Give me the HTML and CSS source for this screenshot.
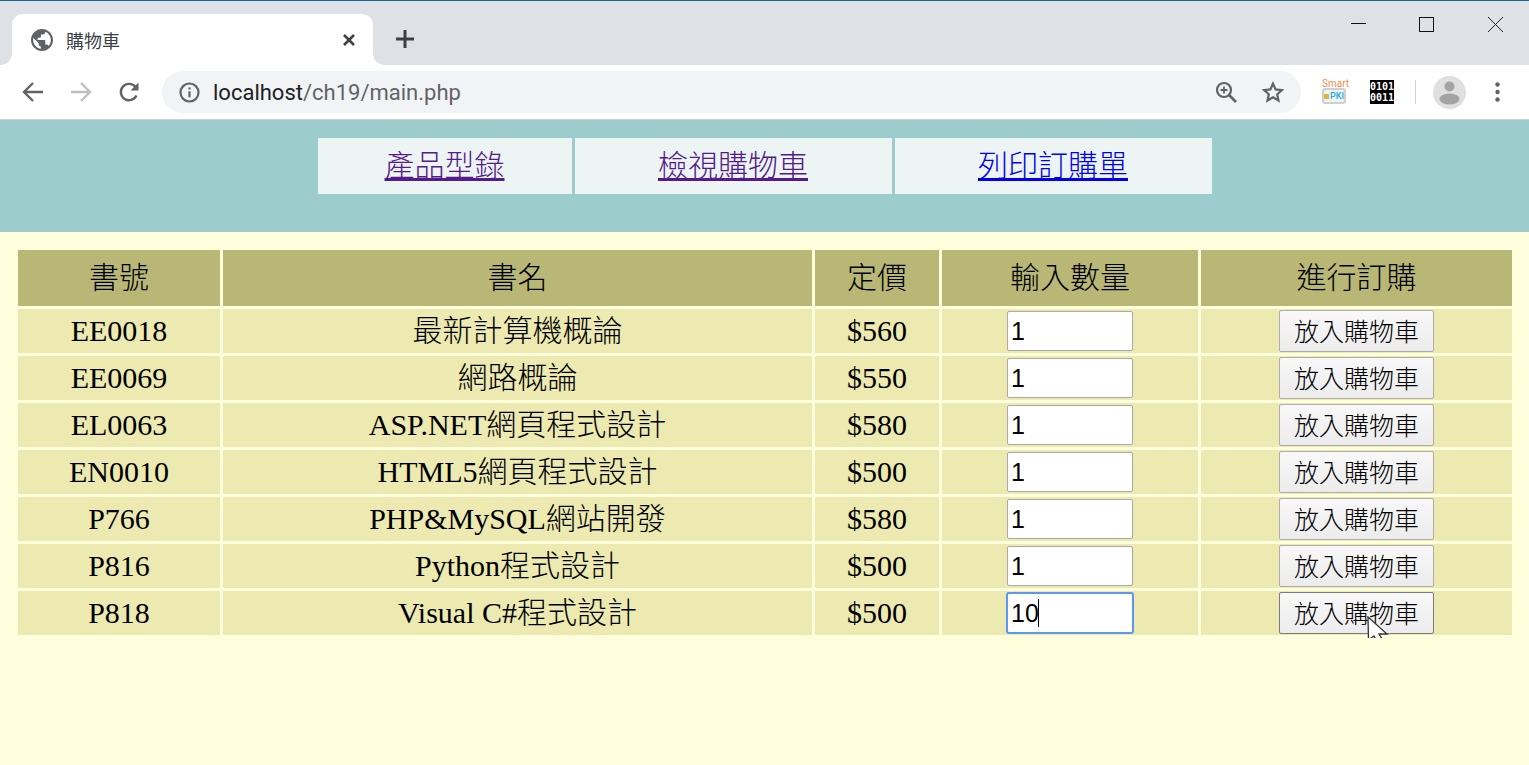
FILE: index.html
```html
<!DOCTYPE html>
<html lang="zh-Hant">

<head>
    <meta charset="UTF-8">
    <title>購物車</title>
    <link rel="stylesheet" href="styles.css">
</head>

<body>
    <div class="browser">
        <div class="tabstrip">
            <div class="tab">
                <svg class="favicon" width="22" height="22" viewBox="2 2 20 20">
                    <path d="M12 2C6.480 2 2 6.480 2 12s4.480 10 10 10 10-4.480 10-10S17.520 2 12 2zm-1 17.930c-3.950-.490-7-3.850-7-7.930 0-.620.080-1.210.210-1.790L9 15v1c0 1.100.900 2 2 2v1.930zm6.900-2.540c-.260-.810-1-1.390-1.900-1.390h-1v-3c0-.550-.450-1-1-1H8v-2h2c.550 0 1-.450 1-1V7h2c1.100 0 2-.900 2-2v-.410c2.930 1.190 5 4.060 5 7.410 0 2.080-.800 3.970-2.100 5.390z" fill="#5f6368" />
                </svg>
                <span class="tab-title">購物車</span>
                <svg class="tab-close" width="14" height="14" viewBox="0 0 14 14">
                    <path d="M2 2l10 10M12 2L2 12" stroke="#3c4043" stroke-width="2.600" fill="none" />
                </svg>
            </div>
            <svg class="new-tab" width="18" height="18" viewBox="0 0 18 18">
                <path d="M9 0v18M0 9h18" stroke="#3c4043" stroke-width="3" fill="none" />
            </svg>
            <div class="window-controls">
                <svg width="15" height="15" viewBox="0 0 15 15">
                    <path d="M0 6.500h15" stroke="#111" stroke-width="1" fill="none" />
                </svg>
                <svg width="15" height="15" viewBox="0 0 15 15">
                    <rect x="0.500" y="0.500" width="14" height="14" stroke="#111" fill="none" />
                </svg>
                <svg class="win-close" width="15" height="15" viewBox="0 0 15 15">
                    <path d="M0 0l15 15M15 0L0 15" stroke="#222" stroke-width="1" fill="none" />
                </svg>
            </div>
        </div>
        <div class="toolbar">
            <svg class="tool-icon" width="22" height="22" viewBox="0 0 22 22">
                <path d="M21 11H3M11 2l-9 9 9 9" stroke="#5f6368" stroke-width="2.400" fill="none" />
            </svg>
            <svg class="tool-icon" width="22" height="22" viewBox="0 0 22 22">
                <path d="M1 11h18M11 2l9 9-9 9" stroke="#bdbfc2" stroke-width="2.400" fill="none" />
            </svg>
            <svg class="tool-icon" width="22" height="22" viewBox="0 0 22 22">
                <path d="M18.500 14.500a8.200 8.200 0 1 1-1.200-8.800" stroke="#5f6368" stroke-width="2.400" fill="none" />
                <path d="M20.500 1.500v8h-8z" fill="#5f6368" />
            </svg>
            <div class="omnibox">
                <svg width="21" height="21" viewBox="0 0 21 21">
                    <circle cx="10.500" cy="10.500" r="9" stroke="#5f6368" stroke-width="2.200" fill="none" />
                    <path d="M9.400 9.200h2.200v6H9.400zM9.400 5.400h2.200v2.200H9.400z" fill="#5f6368" />
                </svg>
                <span class="url"><span class="url-host">localhost</span>/ch19/main.php</span>
                <svg class="zoom-icon" width="22" height="22" viewBox="0 0 22 22">
                    <circle cx="9" cy="9" r="7" stroke="#5f6368" stroke-width="2.200" fill="none" />
                    <path d="M14 14l7 7" stroke="#5f6368" stroke-width="2.600" fill="none" />
                    <path d="M9 5.500v7M5.500 9h7" stroke="#5f6368" stroke-width="1.800" fill="none" />
                </svg>
                <svg class="star-icon" width="22" height="22" viewBox="0 0 22 22">
                    <path d="M11 2.600l2.600 5.800 6.300.7-4.700 4.200 1.300 6.200-5.500-3.200-5.500 3.200 1.300-6.200-4.700-4.200 6.300-.7z" stroke="#5f6368" stroke-width="2.200" fill="none" />
                </svg>
            </div>
            <div class="pki">
                <span class="pki-smart">Smart</span>
                <span class="pki-card"><i class="pki-chip"></i>PKI</span>
            </div>
            <div class="binary">0101<br>0011</div>
            <div class="tool-sep"></div>
            <svg class="avatar" width="33" height="33" viewBox="0 0 33 33">
                <circle cx="16.500" cy="16.500" r="16.500" fill="#dfdfdf" />
                <circle cx="16.500" cy="10.500" r="5" fill="#a3a3a3" />
                <ellipse cx="16.500" cy="23" rx="10" ry="5.500" fill="#a3a3a3" />
            </svg>
            <svg class="menu-dots" width="5" height="21" viewBox="0 0 5 21">
                <circle cx="2.500" cy="2.500" r="2.200" fill="#5f6368" />
                <circle cx="2.500" cy="10" r="2.200" fill="#5f6368" />
                <circle cx="2.500" cy="17.500" r="2.200" fill="#5f6368" />
            </svg>
        </div>
    </div>

    <header class="site-header">
        <table class="nav-table">
            <tr>
                <td class="nav-1"><a class="visited" href="#">產品型錄</a></td>
                <td class="nav-2"><a class="visited" href="#">檢視購物車</a></td>
                <td class="nav-3"><a class="unvisited" href="#">列印訂購單</a></td>
            </tr>
        </table>
    </header>

    <main class="page">
        <table class="books">
            <colgroup>
                <col class="col-id">
                <col class="col-name">
                <col class="col-price">
                <col class="col-qty">
                <col class="col-act">
            </colgroup>
            <tr>
                <th>書號</th>
                <th>書名</th>
                <th>定價</th>
                <th>輸入數量</th>
                <th>進行訂購</th>
            </tr>
            <tr>
                <td>EE0018</td>
                <td>最新計算機概論</td>
                <td>$560</td>
                <td><input class="qty" type="text" value="1"></td>
                <td><button class="add" type="button">放入購物車</button></td>
            </tr>
            <tr>
                <td>EE0069</td>
                <td>網路概論</td>
                <td>$550</td>
                <td><input class="qty" type="text" value="1"></td>
                <td><button class="add" type="button">放入購物車</button></td>
            </tr>
            <tr>
                <td>EL0063</td>
                <td>ASP.NET網頁程式設計</td>
                <td>$580</td>
                <td><input class="qty" type="text" value="1"></td>
                <td><button class="add" type="button">放入購物車</button></td>
            </tr>
            <tr>
                <td>EN0010</td>
                <td>HTML5網頁程式設計</td>
                <td>$500</td>
                <td><input class="qty" type="text" value="1"></td>
                <td><button class="add" type="button">放入購物車</button></td>
            </tr>
            <tr>
                <td>P766</td>
                <td>PHP&amp;MySQL網站開發</td>
                <td>$580</td>
                <td><input class="qty" type="text" value="1"></td>
                <td><button class="add" type="button">放入購物車</button></td>
            </tr>
            <tr>
                <td>P816</td>
                <td>Python程式設計</td>
                <td>$500</td>
                <td><input class="qty" type="text" value="1"></td>
                <td><button class="add" type="button">放入購物車</button></td>
            </tr>
            <tr>
                <td>P818</td>
                <td>Visual C#程式設計</td>
                <td>$500</td>
                <td>
                    <span class="qty-wrap">
                        <input class="qty qty-focus" type="text" value="10">
                        <i class="caret"></i>
                    </span>
                </td>
                <td>
                    <span class="add-wrap">
                        <button class="add add-hover" type="button">放入購物車</button>
                        <svg class="cursor" width="22" height="29" viewBox="0 0 22 29">
                            <path d="M1 1L1.500 24L7 20L11 27.500L16 24.500L12 18H20Z" fill="#fff" stroke="#333" stroke-width="1.300" />
                        </svg>
                    </span>
                </td>
            </tr>
        </table>
    </main>
</body>

</html>
```

FILE: styles.css
```css
body {
    margin: 0;
    background-color: #ffffdd;
    font-family: "Liberation Serif", "Noto Sans CJK TC", serif;
    font-weight: 300;
    overflow: hidden;
}

/* browser window */
.browser {
    height: 120px;
    font-family: "Roboto", "Noto Sans CJK TC", sans-serif;
    font-weight: 400;
}

.tabstrip {
    display: flex;
    align-items: flex-end;
    height: 64px;
    padding-left: 12px;
    background-color: #dee1e6;
    border-top: 1px solid #20618c;
}

.tab {
    position: relative;
    display: flex;
    align-items: center;
    box-sizing: border-box;
    width: 361px;
    height: 51px;
    padding: 0 17px 0 19px;
    background-color: white;
    border-radius: 11px 11px 0 0;
}

/* inverse corners at the foot of the tab */
.tab::before,
.tab::after {
    content: "";
    position: absolute;
    bottom: 0;
    width: 11px;
    height: 11px;
}

.tab::before {
    left: -11px;
    background-image: radial-gradient(circle at 0 0, transparent 10.500px, white 11px);
}

.tab::after {
    right: -11px;
    background-image: radial-gradient(circle at 100% 0, transparent 10.500px, white 11px);
}

.favicon {
    flex: none;
}

.tab-title {
    margin-left: 13px;
    font-size: 18px;
    color: #3c4043;
}

.tab-close {
    margin-left: auto;
}

.new-tab {
    margin: 0 0 17px 23px;
}

.window-controls {
    display: flex;
    gap: 53px;
    margin: 0 26px 33px auto;
}

.win-close {
    margin-left: 1px;
}

.toolbar {
    display: flex;
    align-items: center;
    box-sizing: border-box;
    height: 55px;
    padding: 0 21px 0 22px;
    background-color: white;
    border-bottom: 1px solid #c4d4d4;
}

.tool-icon {
    flex: none;
    margin-right: 26px;
}

.tool-icon:nth-child(3) {
    margin-right: 22px;
}

.omnibox {
    display: flex;
    align-items: center;
    box-sizing: border-box;
    width: 1139px;
    height: 42px;
    padding: 0 17px;
    background-color: #f1f3f4;
    border-radius: 21px;
}

.url {
    margin-left: 13px;
    font-size: 22px;
    color: #5f6368;
}

.url-host {
    color: #202124;
}

.zoom-icon {
    margin-left: auto;
}

.star-icon {
    margin-left: 25px;
}

.pki {
    width: 24px;
    margin-left: 21px;
    text-align: center;
    line-height: 1;
}

.pki-smart {
    display: block;
    height: 8px;
    font-size: 10px;
    line-height: 8px;
    color: #f58a4b;
    white-space: nowrap;
}

.pki-card {
    display: flex;
    align-items: center;
    justify-content: flex-end;
    box-sizing: border-box;
    height: 16px;
    font-size: 9px;
    font-weight: 500;
    white-space: nowrap;
    color: #2aa7ea;
    background-color: #eef4f4;
    border: 2px solid #cfcfcf;
    border-radius: 3px;
}

.pki-chip {
    flex: none;
    width: 5px;
    height: 5px;
    margin-right: 1px;
    background-color: #d8b93c;
}

.binary {
    width: 24px;
    height: 24px;
    margin-left: 24px;
    font-family: "DejaVu Sans Mono", monospace;
    font-size: 10px;
    font-weight: bold;
    line-height: 11px;
    padding-top: 1px;
    box-sizing: border-box;
    text-align: center;
    color: white;
    background-color: black;
}

.tool-sep {
    width: 1px;
    height: 24px;
    margin-left: 21px;
    background-color: #cfd1d3;
}

.avatar {
    margin-left: 17px;
}

.menu-dots {
    margin-left: 29px;
}

/* page */
.site-header {
    height: 112px;
    box-sizing: border-box;
    padding-top: 18px;
    background-color: #9ccccb;
}

.nav-table {
    margin: 0 auto;
    border-collapse: separate;
    border-spacing: 0;
    font-size: 30px;
    line-height: 34px;
}

.nav-table td {
    height: 55px;
    padding: 0 0 1px;
    text-align: center;
    background-color: #ecf5f4;
}

.nav-1 {
    width: 254px;
}

.nav-2,
.nav-3 {
    width: 317px;
    border-left: 3px solid #9ccccb;
}

.nav-table a {
    text-decoration-thickness: 3px;
}

.visited {
    color: #551a8b;
}

.unvisited {
    color: #0000ee;
}

.page {
    padding: 15px 15px 0;
}

.books {
    table-layout: fixed;
    width: 1500px;
    border-collapse: separate;
    border-spacing: 3px;
    font-size: 30px;
    line-height: 34px;
}

.col-id {
    width: 202px;
}

.col-name {
    width: 589px;
}

.col-price {
    width: 124px;
}

.col-qty {
    width: 256px;
}

.col-act {
    width: 311px;
}

.books th,
.books td {
    padding: 0;
    text-align: center;
}

.books th {
    height: 56px;
    font-weight: 300;
    background-color: #b8b776;
}

.books td {
    height: 44px;
    background-color: #ece9b1;
}

.qty {
    box-sizing: border-box;
    width: 126px;
    height: 40px;
    padding: 0 3px;
    font-family: "Liberation Sans", sans-serif;
    font-size: 25px;
    color: black;
    background-color: white;
    border: 1px solid #a9a9a9;
    border-radius: 2px;
    vertical-align: middle;
}

.qty-wrap,
.add-wrap {
    position: relative;
    display: inline-block;
    vertical-align: middle;
}

.qty-focus {
    border-color: #5b97f5;
    box-shadow: 0 0 0 1px #5b97f5;
}

.caret {
    position: absolute;
    left: 31px;
    top: 6px;
    width: 1px;
    height: 28px;
    background-color: black;
}

.add {
    box-sizing: border-box;
    width: 155px;
    height: 42px;
    padding: 0 0 2px;
    font-family: "Noto Sans CJK TC", sans-serif;
    font-size: 25px;
    font-weight: 300;
    color: black;
    background-color: #f0f0f0;
    background-image: linear-gradient(#f8f8f8, #ececec);
    border: 1px solid #adadad;
    border-radius: 2px;
    vertical-align: middle;
}

.add-hover {
    border-color: #7a7a7a;
}

.cursor {
    position: absolute;
    left: 88px;
    top: 24px;
}
```
